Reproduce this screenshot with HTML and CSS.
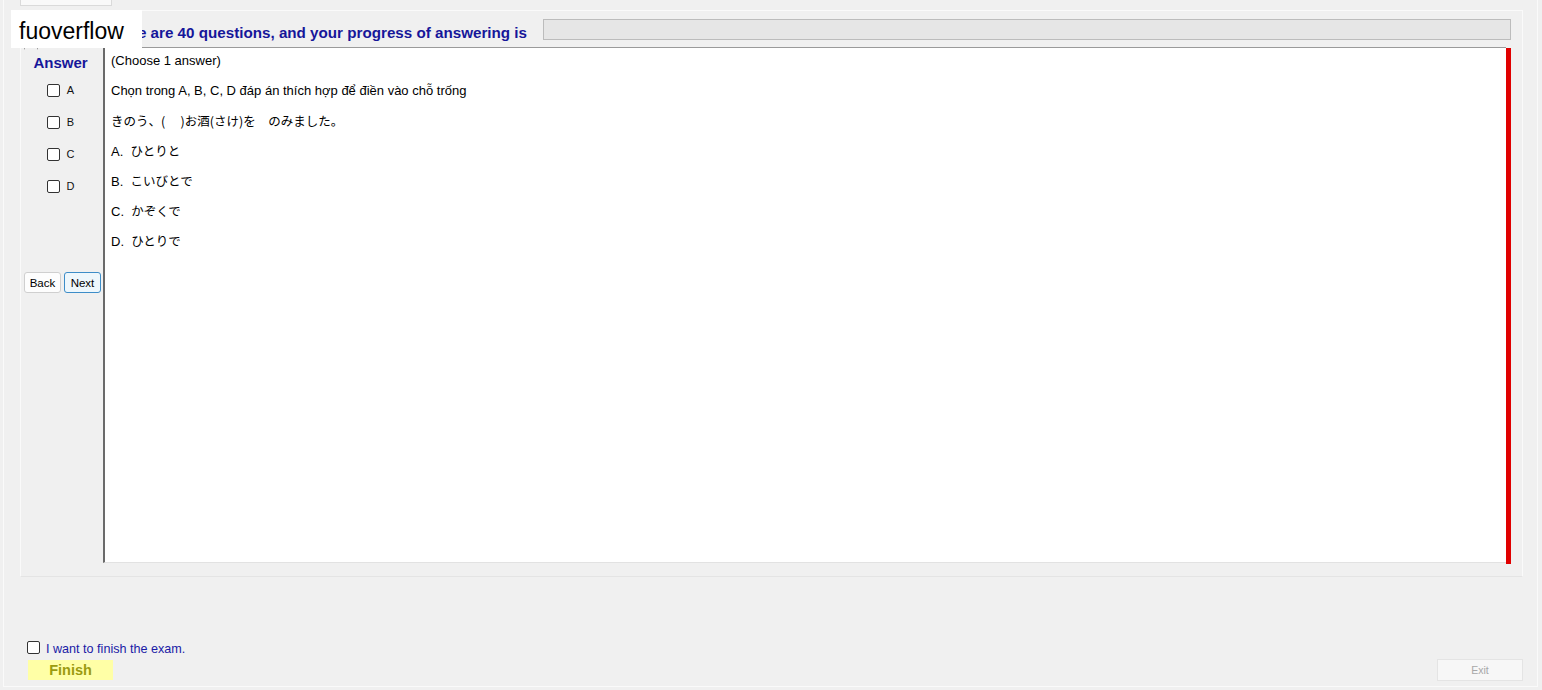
FILE: index.html
```html
<!DOCTYPE html>
<html>
<head>
<meta charset="utf-8">
<title>Exam</title>
<link rel="stylesheet" href="styles.css">
</head>
<body>
<div class="window">
  <div class="tabstrip"><div class="tab"></div></div>
  <div class="tabpage">
    <div class="group">
      <div class="header">
        <div class="hdr-title">There are 40 questions, and your progress of answering is</div>
        <div class="progress"></div>
      </div>
      <div class="main">
        <div class="answers">
          <div class="ans-title">Answer</div>
          <label class="opt"><input type="checkbox" class="cb"><span>A</span></label>
          <label class="opt"><input type="checkbox" class="cb"><span>B</span></label>
          <label class="opt"><input type="checkbox" class="cb"><span>C</span></label>
          <label class="opt"><input type="checkbox" class="cb"><span>D</span></label>
          <div class="nav">
            <button class="btn">Back</button>
            <button class="btn btn-focus">Next</button>
          </div>
        </div>
        <div class="question">
          <div class="qtext">
            <div class="line">(Choose 1 answer)</div>
            <div class="line">Chọn trong A, B, C, D đáp án thích hợp để điền vào chỗ trống</div>
            <div class="line jp">きのう、(　 )お酒(さけ)を　のみました。</div>
            <div class="line jp"><span class="lat">A.&nbsp;&nbsp;</span>ひとりと</div>
            <div class="line jp"><span class="lat">B.&nbsp;&nbsp;</span>こいびとで</div>
            <div class="line jp"><span class="lat">C.&nbsp;&nbsp;</span>かぞくで</div>
            <div class="line jp"><span class="lat">D.&nbsp;&nbsp;</span>ひとりで</div>
          </div>
          <div class="redbar"></div>
        </div>
      </div>
    </div>
    <div class="footer">
      <div class="foot-left">
        <label class="finish-check"><input type="checkbox" class="cb"><span>I want to finish the exam.</span></label>
        <button class="finish">Finish</button>
      </div>
      <button class="exit">Exit</button>
    </div>
  </div>
  <div class="clock-arc"></div>
  <div class="watermark">fuoverflow</div>
</div>
</body>
</html>
```

FILE: styles.css
```css
html, body {
  margin: 0;
  padding: 0;
}
body {
  background: #f0f0f0;
  font-family: "Liberation Sans", Arial, "Noto Sans CJK JP", sans-serif;
  font-size: 12px;
  color: #000;
  width: 1542px;
  height: 690px;
  overflow: hidden;
}
.window {
  position: relative;
  margin-left: 3px;
  width: 1535px;
  height: 687px;
  border-left: 1px solid #fafafa;
  border-right: 1px solid #fafafa;
  border-bottom: 1px solid #fafafa;
  box-sizing: border-box;
  display: flex;
  flex-direction: column;
}
.tabstrip {
  height: 6px;
  display: flex;
}
.tab {
  margin-left: 16px;
  width: 90px;
  height: 5px;
  background: #f9f9f9;
  border: 1px solid #dadada;
  border-top: none;
}
.tabpage {
  flex: 1;
  display: flex;
  flex-direction: column;
  padding: 4px 14px 0 16px;
}
.group {
  height: 567px;
  box-sizing: border-box;
  border: 1px solid #fafafa;
  border-bottom-color: #e4e4e4;
  display: flex;
  flex-direction: column;
}
.header {
  display: flex;
  align-items: center;
  height: 36px;
  padding-left: 84px;
  padding-right: 11px;
}
.hdr-title {
  font-weight: bold;
  font-size: 15.2px;
  color: #16169a;
  white-space: nowrap;
  position: relative;
  top: 3px;
}
.progress {
  flex: 1;
  height: 21px;
  margin-left: 16px;
  box-sizing: border-box;
  background: #e6e6e6;
  border: 1px solid #bcbcbc;
}
.main {
  display: flex;
  height: 516px;
}
.answers {
  width: 81px;
  display: flex;
  flex-direction: column;
  align-items: center;
  padding-left: 1px;
}
.ans-title {
  font-weight: bold;
  font-size: 15px;
  color: #16169a;
  margin-top: 8px;
  height: 16px;
  line-height: 16px;
  position: relative;
  left: -2px;
}
.opt {
  display: flex;
  align-items: center;
  height: 32px;
  font-size: 11px;
  color: #111;
  position: relative;
  left: -2px;
}
.answers .opt:first-of-type {
  margin-top: 3px;
}
.opt span {
  margin-left: 7px;
}
.cb {
  appearance: none;
  -webkit-appearance: none;
  width: 13px;
  height: 13px;
  margin: 0;
  box-sizing: border-box;
  border: 1px solid #333;
  border-radius: 2px;
  background: #fff;
}
.nav {
  display: flex;
  gap: 3px;
  margin-top: 70px;
  margin-left: 0;
}
.btn {
  width: 37px;
  height: 21px;
  padding: 0;
  font-family: "Liberation Sans", Arial, sans-serif;
  font-size: 11.5px;
  color: #000;
  background: #fdfdfd;
  border: 1px solid #cfcfcf;
  border-radius: 3px;
}
.btn-focus {
  border-color: #3d8dc8;
  background: #eef7fc;
}
.question {
  flex: 1;
  display: flex;
  margin-right: 11px;
}
.qtext {
  flex: 1;
  background: #fff;
  border-left: 2px solid #6a6a6a;
  border-top: 1px solid #9a9a9a;
  border-bottom: 1px solid #e2e2e2;
  padding: 5px 8px 0 6px;
  display: flex;
  flex-direction: column;
  gap: 14px;
}
.line {
  height: 16px;
  line-height: 16px;
  font-size: 13px;
  white-space: pre;
}
.jp {
  font-family: "Noto Sans CJK JP", "Liberation Sans", sans-serif;
  font-size: 12.5px;
}
.lat {
  font-family: "Liberation Sans", Arial, sans-serif;
  font-size: 13px;
}
.redbar {
  width: 5px;
  background: #e00000;
  margin-top: 1px;
  margin-bottom: -1px;
}
.footer {
  flex: 1;
  display: flex;
  justify-content: space-between;
  align-items: flex-end;
  padding: 0 0 6px 7px;
}
.foot-left {
  display: flex;
  flex-direction: column;
}
.finish-check {
  display: flex;
  align-items: center;
  gap: 6px;
  color: #1a1aa6;
  font-size: 12.6px;
}
.finish-check span {
  position: relative;
  top: 2px;
}
.finish {
  margin-top: 6px;
  margin-left: 1px;
  width: 85px;
  height: 20px;
  padding: 0;
  border: none;
  background: #ffffa6;
  color: #9b9b10;
  font-family: "Liberation Sans", Arial, sans-serif;
  font-weight: bold;
  font-size: 14.5px;
}
.exit {
  width: 86px;
  height: 22px;
  padding: 0;
  margin-bottom: -1px;
  background: #f7f7f7;
  border: 1px solid #e4e4e4;
  color: #a8a8a8;
  font-family: "Liberation Sans", Arial, sans-serif;
  font-size: 10.5px;
}
.clock-arc {
  position: absolute;
  left: 20px;
  top: 44px;
  width: 14px;
  height: 4px;
  border-top: 2px solid #222;
  border-radius: 8px 8px 0 0;
}
.watermark {
  position: absolute;
  left: 7px;
  top: 10px;
  width: 131px;
  height: 38px;
  box-sizing: border-box;
  background: #fff;
  padding-left: 8px;
  font-family: "Liberation Sans", Arial, sans-serif;
  font-size: 23px;
  line-height: 42px;
  color: #000;
}
```
